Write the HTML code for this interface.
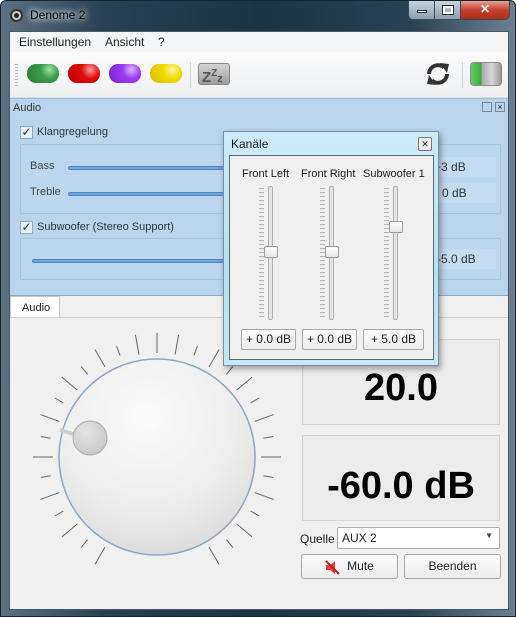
<!DOCTYPE html>
<html><head><meta charset="utf-8">
<style>
*{box-sizing:border-box;margin:0;padding:0}
body{width:516px;height:617px;overflow:hidden;font-family:"Liberation Sans",sans-serif;font-size:11px;color:#1e1e1e;background:#fff}
.win{position:absolute;left:0;top:0;width:516px;height:617px;background:linear-gradient(90deg,#5d7183 0%,#2a4154 20%,#1b3342 50%,#2a4254 80%,#6d8090 100%);border-radius:6px 6px 0 0;border:1px solid #1a2530}
.abs{position:absolute}
.client{position:absolute;left:8px;top:30px;width:500px;height:579px;background:#f0f0f0;border:1px solid #4a5a68}
.menu{position:absolute;left:0;top:0;width:498px;height:20px;background:#f5f6f7;font-size:12px}
.menu span{position:absolute;top:3px}
.tool{position:absolute;left:0;top:20px;width:498px;height:46px;background:linear-gradient(#fbfbfc,#eef0f2);border-bottom:1px solid #d8dde2}
.pill{position:absolute;top:12px;width:32px;height:19px;border-radius:9px}
.dock{position:absolute;left:0;top:66px;width:498px;height:198px;background:#bad4ee;border-top:1px solid #9fbedc;border-bottom:1px solid #8ea9c4}
.grp{position:absolute;border:1px solid #a9c4df;border-radius:2px;background:#bcd6ef}
.chk{position:absolute;width:13px;height:13px;border:1px solid #8fa9c2;background:#e6eef6;font-size:12px;line-height:11px;text-align:center;color:#234}
.track{position:absolute;height:4px;border-radius:2px;background:#6fa6de;border:1px solid #4f86c0}
.valbox{position:absolute;background:#c6dcf2;height:20px;padding:3px 4px;font-size:12px;color:#333}
.dlg{position:absolute;left:222px;top:130px;width:216px;height:235px;background:linear-gradient(#cdebf8,#b8e0f3 60%,#c6e8f6);border:1px solid #7b8e9c;box-shadow:2px 3px 6px rgba(0,0,0,.35)}
.dlgin{position:absolute;left:5px;top:23px;width:205px;height:205px;background:#f0f0f0;border:1px solid #5f6c75}
.btn{position:absolute;background:linear-gradient(#fdfdfd,#ececec);border:1px solid #a8a8a8;border-radius:3px;text-align:center;font-size:12px}
.vs{position:absolute;top:30px;width:5px;height:134px;background:#e4e4e4;border:1px solid #b0b0b0;border-radius:2px}
.vh{position:absolute;width:14px;height:12px;background:linear-gradient(#fff,#e6e6e6);border:1px solid #9a9a9a;border-radius:2px}
.ticks{position:absolute;top:32px;width:5px;height:130px;background:repeating-linear-gradient(#b5b5b5 0 1px,transparent 1px 4px)}
.disp{position:absolute;background:#ececec;border:1px solid #d3d3d3;text-align:center;font-weight:bold;color:#000}
</style></head><body>
<div class="win">
  <div class="abs" style="left:9px;top:8px;width:13px;height:13px;border-radius:50%;background:#ccc;border:2px solid #333"><div style="margin:2px;width:5px;height:5px;border-radius:50%;background:#222"></div></div>
  <div class="abs" style="left:29px;top:7px;font-size:12px;color:#000;text-shadow:0 0 8px #fff,0 0 6px #fff">Denome 2</div>
  <div class="abs" style="left:407px;top:0;width:102px;height:19px;border:1px solid #3a4a58;border-top:none;border-radius:0 0 5px 5px;overflow:hidden;display:flex">
    <div style="width:26px;background:linear-gradient(#c8d3de,#8c9fb2);border-right:1px solid #445"><div style="margin:9px auto 0;width:10px;height:3px;background:#fff;border:1px solid #333"></div></div>
    <div style="width:26px;background:linear-gradient(#c8d3de,#8c9fb2);border-right:1px solid #445"><div style="margin:5px auto 0;width:10px;height:8px;border:2px solid #fff;outline:1px solid #333"></div></div>
    <div style="flex:1;background:linear-gradient(#e8a196,#c4402c 50%,#b22d16);color:#fff;font-weight:bold;text-align:center;font-size:12px;line-height:17px">✕</div>
  </div>
  <div class="client">
    <div class="menu"><span style="left:9px">Einstellungen</span><span style="left:95px">Ansicht</span><span style="left:148px">?</span></div>
    <div class="tool">
      <div class="abs" style="left:5px;top:12px;width:3px;height:22px;background:repeating-linear-gradient(#bbb 0 1px,transparent 1px 3px)"></div>
      <div class="pill" style="left:17px;background:radial-gradient(circle at 70% 30%,#9fe0a5 0,#3a9a48 35%,#2b7d38)"></div>
      <div class="pill" style="left:58px;background:radial-gradient(circle at 70% 30%,#ff9a9a 0,#dc0c0c 35%,#b00)"></div>
      <div class="pill" style="left:99px;background:radial-gradient(circle at 70% 30%,#e0b0ff 0,#9a3cf0 35%,#7a22d0)"></div>
      <div class="pill" style="left:140px;background:radial-gradient(circle at 70% 30%,#fff6a0 0,#f2d800 35%,#d9bc00)"></div>
      <div class="abs" style="left:180px;top:10px;width:1px;height:26px;background:#d6d6d6"></div>
      <div class="abs" style="left:188px;top:11px;width:32px;height:22px;border-radius:3px;background:linear-gradient(#d4d4d4,#9c9c9c);border:1px solid #888;font-weight:bold;color:#555;font-size:15px;line-height:20px;padding-left:3px">Z<sup style="font-size:10px">Z</sup><span style="font-size:11px">z</span></div>
      <svg class="abs" style="left:415px;top:10px" width="26" height="24" viewBox="0 0 26 24">
        <path d="M4 12 A9 9 0 0 1 19 5.5" fill="none" stroke="#333" stroke-width="4"/>
        <path d="M15 1 L24 2 L22 11 Z" fill="#333"/>
        <path d="M22 12 A9 9 0 0 1 7 18.5" fill="none" stroke="#333" stroke-width="4"/>
        <path d="M11 23 L2 22 L4 13 Z" fill="#333"/>
      </svg>
      <div class="abs" style="left:452px;top:10px;width:1px;height:26px;background:#d6d6d6"></div>
      <div class="abs" style="left:460px;top:10px;width:32px;height:24px;border-radius:4px;background:linear-gradient(90deg,#5fd060 0,#3aa83a 35%,#aaa 36%,#d8d8d8 70%,#999);border:1px solid #888"></div>
    </div>
    <div class="dock">
      <div class="abs" style="left:3px;top:3px;font-size:11px;color:#333">Audio</div>
      <div class="abs" style="left:472px;top:3px;width:10px;height:10px;border:1px solid #789;font-size:7px"></div>
      <div class="abs" style="left:485px;top:3px;width:10px;height:10px;border:1px solid #789;font-size:9px;line-height:8px;text-align:center">×</div>
      <div class="chk" style="left:10px;top:27px">✓</div>
      <div class="abs" style="left:27px;top:27px;font-size:11px;color:#333">Klangregelung</div>
      <div class="grp" style="left:10px;top:45px;width:481px;height:70px"></div>
      <div class="abs" style="left:20px;top:61px;color:#444">Bass</div>
      <div class="track" style="left:58px;top:67px;width:170px"></div>
      <div class="abs" style="left:20px;top:87px;color:#444">Treble</div>
      <div class="track" style="left:58px;top:93px;width:170px"></div>
      <div class="valbox" style="left:420px;top:58px;width:66px">+3 dB</div>
      <div class="valbox" style="left:420px;top:84px;width:66px;padding-left:12px">0 dB</div>
      <div class="chk" style="left:10px;top:122px">✓</div>
      <div class="abs" style="left:27px;top:122px;color:#333">Subwoofer (Stereo Support)</div>
      <div class="grp" style="left:10px;top:139px;width:481px;height:42px"></div>
      <div class="track" style="left:22px;top:160px;width:206px"></div>
      <div class="valbox" style="left:423px;top:150px;width:63px">-5.0 dB</div>
    </div>
    <div class="abs" style="left:0;top:264px;width:50px;height:22px;background:#fff;border:1px solid #c8c8c8;border-bottom:none;padding:5px 11px;font-size:11px">Audio</div>
    <div class="abs" style="left:0;top:285px;width:498px;height:1px;background:#d0d0d0"></div>
    <svg class="abs" style="left:0;top:286px" width="300" height="293">
      <defs>
        <radialGradient id="k" cx="45%" cy="30%" r="75%"><stop offset="0" stop-color="#fbfbfb"/><stop offset=".6" stop-color="#eeeeee"/><stop offset="1" stop-color="#d9d9d9"/></radialGradient>
        <radialGradient id="d" cx="40%" cy="35%" r="70%"><stop offset="0" stop-color="#e4e4e4"/><stop offset="1" stop-color="#c8c8c8"/></radialGradient>
      </defs>
      <g transform="translate(147,139)" stroke="#666" stroke-width="1">
        <g id="t">
          <line x1="0" y1="-104" x2="0" y2="-124" transform="rotate(-150)"/><line x1="0" y1="-108" x2="0" y2="-118" transform="rotate(-140)"/>
          <line x1="0" y1="-104" x2="0" y2="-124" transform="rotate(-130)"/><line x1="0" y1="-108" x2="0" y2="-118" transform="rotate(-120)"/>
          <line x1="0" y1="-104" x2="0" y2="-124" transform="rotate(-110)"/><line x1="0" y1="-108" x2="0" y2="-118" transform="rotate(-100)"/>
          <line x1="0" y1="-104" x2="0" y2="-124" transform="rotate(-90)"/><line x1="0" y1="-108" x2="0" y2="-118" transform="rotate(-80)"/>
          <line x1="0" y1="-104" x2="0" y2="-124" transform="rotate(-70)"/><line x1="0" y1="-108" x2="0" y2="-118" transform="rotate(-60)"/>
          <line x1="0" y1="-104" x2="0" y2="-124" transform="rotate(-50)"/><line x1="0" y1="-108" x2="0" y2="-118" transform="rotate(-40)"/>
          <line x1="0" y1="-104" x2="0" y2="-124" transform="rotate(-30)"/><line x1="0" y1="-108" x2="0" y2="-118" transform="rotate(-20)"/>
          <line x1="0" y1="-104" x2="0" y2="-124" transform="rotate(-10)"/><line x1="0" y1="-104" x2="0" y2="-124" transform="rotate(0)"/>
        </g>
        <use href="#t" transform="scale(-1,1)"/>
        <circle r="98" fill="url(#k)" stroke="#8aa9c9" stroke-width="1.5"/>
        <line x1="-97" y1="-27" x2="-84" y2="-23" stroke="#ccc" stroke-width="4"/>
        <circle cx="-67" cy="-19" r="17" fill="url(#d)" stroke="#aaa"/>
      </g>
    </svg>
    <div class="disp" style="left:292px;top:307px;width:198px;height:86px;font-size:38px;line-height:96px">20.0</div>
    <div class="disp" style="left:292px;top:403px;width:198px;height:86px;font-size:38px;line-height:100px">-60.0 dB</div>
    <div class="abs" style="left:290px;top:500px;font-size:12px">Quelle</div>
    <div class="abs" style="left:327px;top:495px;width:163px;height:22px;background:#fff;border:1px solid #aaa;border-radius:2px;padding:3px 4px;font-size:12px">AUX 2<span style="position:absolute;right:6px;top:3px;font-size:8px;color:#444">▼</span></div>
    <div class="btn" style="left:291px;top:522px;width:97px;height:25px;line-height:23px">
      <svg style="position:absolute;left:22px;top:4px" width="17" height="17" viewBox="0 0 17 17"><path d="M2 6 H6 L11 2 V15 L6 11 H2 Z" fill="#e04040"/><line x1="2" y1="2" x2="15" y2="15" stroke="#c02020" stroke-width="2"/></svg>
      <span style="margin-left:22px">Mute</span></div>
    <div class="btn" style="left:394px;top:522px;width:97px;height:25px;line-height:23px">Beenden</div>
  </div>
  <div class="dlg">
    <div class="abs" style="left:7px;top:5px;font-size:12px">Kanäle</div>
    <div class="abs" style="left:194px;top:5px;width:14px;height:14px;border:1px solid #777;border-radius:2px;background:#eee;font-size:9px;line-height:12px;text-align:center">✕</div>
    <div class="dlgin">
      <div class="abs" style="left:12px;top:12px;font-size:11px;white-space:nowrap">Front Left</div>
      <div class="abs" style="left:71px;top:12px;font-size:11px;white-space:nowrap">Front Right</div>
      <div class="abs" style="left:133px;top:12px;font-size:11px;white-space:nowrap">Subwoofer 1</div>
      <div class="ticks" style="left:29px"></div><div class="vs" style="left:38px"></div><div class="vh" style="left:34px;top:90px"></div>
      <div class="ticks" style="left:90px"></div><div class="vs" style="left:99px"></div><div class="vh" style="left:95px;top:90px"></div>
      <div class="ticks" style="left:154px"></div><div class="vs" style="left:163px"></div><div class="vh" style="left:159px;top:65px"></div>
      <div class="btn" style="left:11px;top:173px;width:55px;height:21px;line-height:19px;border-radius:2px">+ 0.0 dB</div>
      <div class="btn" style="left:72px;top:173px;width:55px;height:21px;line-height:19px;border-radius:2px">+ 0.0 dB</div>
      <div class="btn" style="left:133px;top:173px;width:61px;height:21px;line-height:19px;border-radius:2px">+ 5.0 dB</div>
    </div>
  </div>
</div>
</body></html>
